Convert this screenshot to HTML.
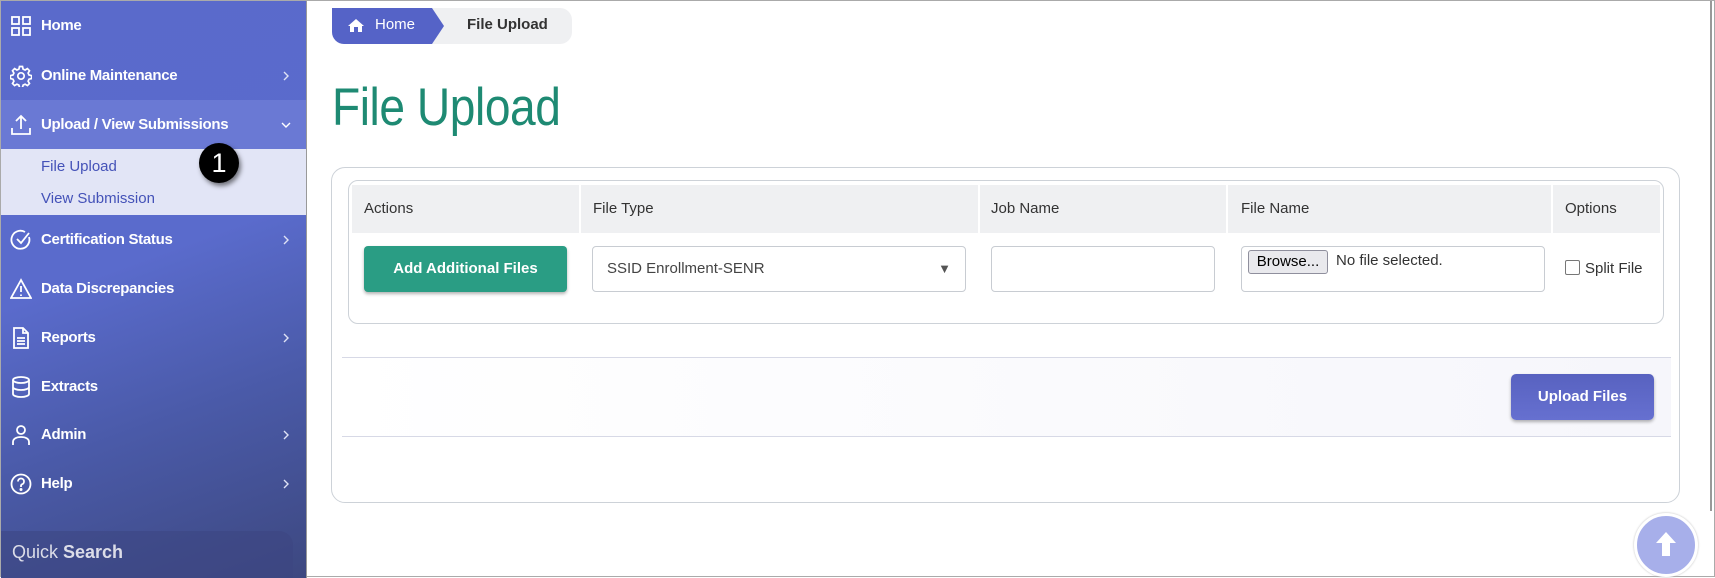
<!DOCTYPE html>
<html><head><meta charset="utf-8"><style>
*{box-sizing:border-box;margin:0;padding:0}
body{width:1715px;height:577px;overflow:hidden;background:#fff;font-family:"Liberation Sans",sans-serif;position:relative;border:1px solid #aaa}
.sb{position:absolute;left:0;top:0;width:306px;height:577px;background:linear-gradient(160deg,#5a6acb 0%,#5a6bcc 45%,#4a5aa8 70%,#3d4880 100%);border-right:1px solid #999}
.it{position:absolute;left:0;width:305px;height:49px;color:#fff;font-weight:bold;font-size:15px;display:flex;align-items:center}
.it span{position:absolute;left:40px;letter-spacing:-0.3px}
.it svg.ic{position:absolute;left:9px;width:22px;height:22px}
.it .ch{position:absolute;left:280px;width:10px;height:10px}
.sub{position:absolute;left:0;top:148px;width:305px;height:66px;background:#e2e5f6}
.sub div{position:absolute;left:40px;color:#4452b8;font-size:15px}
.qs{position:absolute;left:0;top:530px;width:292px;height:47px;background:rgba(60,70,130,.55);border-top-right-radius:14px;color:#dcdde8;font-size:18px;padding:11px 0 0 11px}
.badge{position:absolute;left:198px;top:142px;width:40px;height:40px;border-radius:50%;background:#000;color:#fff;font-size:27px;text-align:center;line-height:40px;box-shadow:2px 3px 5px rgba(0,0,0,.5)}
.bc{position:absolute;left:331px;top:7px;width:240px;height:36px;background:#eff0f2;border-radius:0 12px 12px 12px}
.bch{position:absolute;left:331px;top:7px;height:36px;width:112px;background:#5563c7;border-radius:0 0 0 12px;clip-path:polygon(0 0,100px 0,112px 18px,100px 36px,0 36px)}
.bc1{position:absolute;left:374px;top:15px;color:#fff;font-size:15px}
.bc2{position:absolute;left:466px;top:15px;color:#333;font-size:15px;font-weight:bold}
h1{position:absolute;left:331px;top:76px;font-weight:normal;font-size:53px;color:#1e8a73;letter-spacing:-0.5px;transform:scaleX(0.87);transform-origin:0 0;white-space:nowrap}
.card{position:absolute;left:330px;top:166px;width:1349px;height:336px;border:1px solid #cdd2d8;border-radius:14px}
.tb{position:absolute;left:347px;top:179px;width:1316px;height:144px;border:1px solid #cdd2d8;border-radius:10px}
.hd{position:absolute;left:351px;top:184px;width:1308px;height:48px;background:#eff0f2}
.vl{position:absolute;top:184px;width:2px;height:48px;background:#fff}
.th{position:absolute;top:199px;font-size:15px;color:#333}
.btn{position:absolute;left:363px;top:245px;width:203px;height:46px;background:#2a9d84;border-radius:4px;color:#fff;font-weight:bold;font-size:15px;text-align:center;line-height:46px;box-shadow:0 2px 3px rgba(0,0,0,.3)}
.inp{position:absolute;top:245px;height:46px;border:1px solid #c8ccd2;border-radius:4px;background:#fff}
.ln{position:absolute;left:341px;width:1329px;height:1px;background:#d7d9e6}
.up{position:absolute;left:1510px;top:373px;width:143px;height:46px;background:linear-gradient(#5862c0,#6670d0);border-radius:5px;color:#fff;font-weight:bold;font-size:15px;text-align:center;line-height:46px;box-shadow:0 2px 3px rgba(0,0,0,.3)}
.top{position:absolute;left:1633px;top:512px;width:64px;height:64px;border-radius:50%;background:#a7afea;border:3px solid #fff;box-shadow:0 0 2px #bbb}
</style></head><body>
<div class="sb">
 <div class="it" style="top:0"><svg class="ic" viewBox="0 0 22 22" fill="none" stroke="#fff" stroke-width="1.8"><rect x="2" y="2" width="7" height="7"/><rect x="13" y="2" width="7" height="7"/><rect x="2" y="13" width="7" height="7"/><rect x="13" y="13" width="7" height="7"/></svg><span>Home</span></div>
 <div class="it" style="top:50px"><svg class="ic" viewBox="0 0 22 22" fill="none" stroke="#fff" stroke-width="1.7"><circle cx="11" cy="11" r="3.2"/><path d="M9.5 1.5h3l.6 2.6 2 .9 2.3-1.4 2.1 2.1-1.4 2.3.9 2 2.6.6v3l-2.6.6-.9 2 1.4 2.3-2.1 2.1-2.300-1.4-2 .9-.6 2.6h-3l-.6-2.6-2-.9-2.3 1.4-2.1-2.1 1.4-2.3-.9-2-2.6-.6v-3l2.6-.6.9-2-1.4-2.3 2.1-2.1 2.3 1.4 2-.9z"/></svg><span>Online Maintenance</span><svg class="ch" viewBox="0 0 10 10" fill="none" stroke="#dfe2f5" stroke-width="1.4"><path d="M3 1l4 4-4 4"/></svg></div>
 <div class="it" style="top:99px;background:#6a79d4"><svg class="ic" viewBox="0 0 22 22" fill="none" stroke="#fff" stroke-width="1.8"><path d="M11 15V2M6 7l5-5 5 5M2 14v6h18v-6"/></svg><span>Upload / View Submissions</span><svg class="ch" viewBox="0 0 10 10" fill="none" stroke="#fff" stroke-width="1.4"><path d="M1 3l4 4 4-4"/></svg></div>
 <div class="sub"><div style="top:9px">File Upload</div><div style="top:41px">View Submission</div></div>
 <div class="it" style="top:214px"><svg class="ic" viewBox="0 0 22 22" fill="none" stroke="#fff" stroke-width="1.8"><path d="M19 8A9 9 0 1 1 15 3"/><path d="M7 10l4 4 8-10"/></svg><span>Certification Status</span><svg class="ch" viewBox="0 0 10 10" fill="none" stroke="#dfe2f5" stroke-width="1.4"><path d="M3 1l4 4-4 4"/></svg></div>
 <div class="it" style="top:263px"><svg class="ic" viewBox="0 0 22 22" fill="none" stroke="#fff" stroke-width="1.8"><path d="M11 2L1 20h20z"/><path d="M11 8v6M11 16.5v1.5"/></svg><span>Data Discrepancies</span></div>
 <div class="it" style="top:312px"><svg class="ic" viewBox="0 0 22 22" fill="none" stroke="#fff" stroke-width="1.8"><path d="M4 1h9l5 5v15H4z"/><path d="M13 1v5h5M7 11h8M7 14h8M7 17h8"/></svg><span>Reports</span><svg class="ch" viewBox="0 0 10 10" fill="none" stroke="#dfe2f5" stroke-width="1.4"><path d="M3 1l4 4-4 4"/></svg></div>
 <div class="it" style="top:361px"><svg class="ic" viewBox="0 0 22 22" fill="none" stroke="#fff" stroke-width="1.8"><ellipse cx="11" cy="4" rx="8" ry="3"/><path d="M3 4v14c0 1.7 3.6 3 8 3s8-1.3 8-3V4M3 11c0 1.7 3.6 3 8 3s8-1.3 8-3"/></svg><span>Extracts</span></div>
 <div class="it" style="top:409px"><svg class="ic" viewBox="0 0 22 22" fill="none" stroke="#fff" stroke-width="1.8"><circle cx="11" cy="6" r="4"/><path d="M3 21v-3c0-3 3-5 8-5s8 2 8 5v3"/></svg><span>Admin</span><svg class="ch" viewBox="0 0 10 10" fill="none" stroke="#dfe2f5" stroke-width="1.4"><path d="M3 1l4 4-4 4"/></svg></div>
 <div class="it" style="top:458px"><svg class="ic" viewBox="0 0 22 22" fill="none" stroke="#fff" stroke-width="1.8"><circle cx="11" cy="11" r="9.5"/><path d="M8 8.5a3 3 0 1 1 4 2.8c-.7.3-1 .9-1 1.7v1"/><circle cx="11" cy="16.5" r=".6" fill="#fff"/></svg><span>Help</span><svg class="ch" viewBox="0 0 10 10" fill="none" stroke="#dfe2f5" stroke-width="1.4"><path d="M3 1l4 4-4 4"/></svg></div>
 <div class="qs">Quick <b>Search</b></div>
</div>
<div class="badge">1</div>

<div class="bc"></div><div class="bch"></div>
<svg style="position:absolute;left:347px;top:17px" width="16" height="14" viewBox="0 0 16 14" fill="#fff"><path d="M8 1L0 8h2v6h4V9h4v5h4V8h2z"/></svg>
<div class="bc1">Home</div><div class="bc2">File Upload</div>
<h1>File Upload</h1>

<div class="card"></div>
<div class="tb"></div>
<div class="hd"></div>
<div class="vl" style="left:578px"></div><div class="vl" style="left:977px"></div><div class="vl" style="left:1225px"></div><div class="vl" style="left:1550px"></div>
<div class="th" style="left:363px">Actions</div>
<div class="th" style="left:592px">File Type</div>
<div class="th" style="left:990px">Job Name</div>
<div class="th" style="left:1240px">File Name</div>
<div class="th" style="left:1564px">Options</div>
<div class="btn">Add Additional Files</div>
<div class="inp" style="left:591px;width:374px"><span style="position:absolute;left:14px;top:13px;font-size:15px;color:#444">SSID Enrollment-SENR</span><span style="position:absolute;right:14px;top:14px;font-size:13px;color:#555">▼</span></div>
<div class="inp" style="left:990px;width:224px"></div>
<div class="inp" style="left:1240px;width:304px"><span style="position:absolute;left:6px;top:3px;width:80px;height:24px;background:#e9e9ed;border:1px solid #8f8f9d;border-radius:3px;font-size:15px;color:#000;text-align:center;line-height:22px">Browse...</span><span style="position:absolute;left:94px;top:5px;font-size:15px;color:#333">No file selected.</span></div>
<div style="position:absolute;left:1564px;top:259px;width:15px;height:15px;border:1px solid #777;border-radius:2px;background:#fff"></div>
<div style="position:absolute;left:1584px;top:259px;font-size:15px;color:#333">Split File</div>
<div class="ln" style="top:356px"></div>
<div style="position:absolute;left:341px;top:357px;width:1329px;height:78px;background:linear-gradient(90deg,#fff,#f6f6fb)"></div>
<div class="ln" style="top:435px"></div>
<div class="up">Upload Files</div>
<div style="position:absolute;left:1709px;top:0;width:2px;height:510px;background:#999"></div>
<div class="top"><svg style="position:absolute;left:18px;top:15px" width="22" height="26" viewBox="0 0 22 26" fill="#fff"><path d="M11 1L1 12h6v13h8V12h6z"/></svg></div>
</body></html>
